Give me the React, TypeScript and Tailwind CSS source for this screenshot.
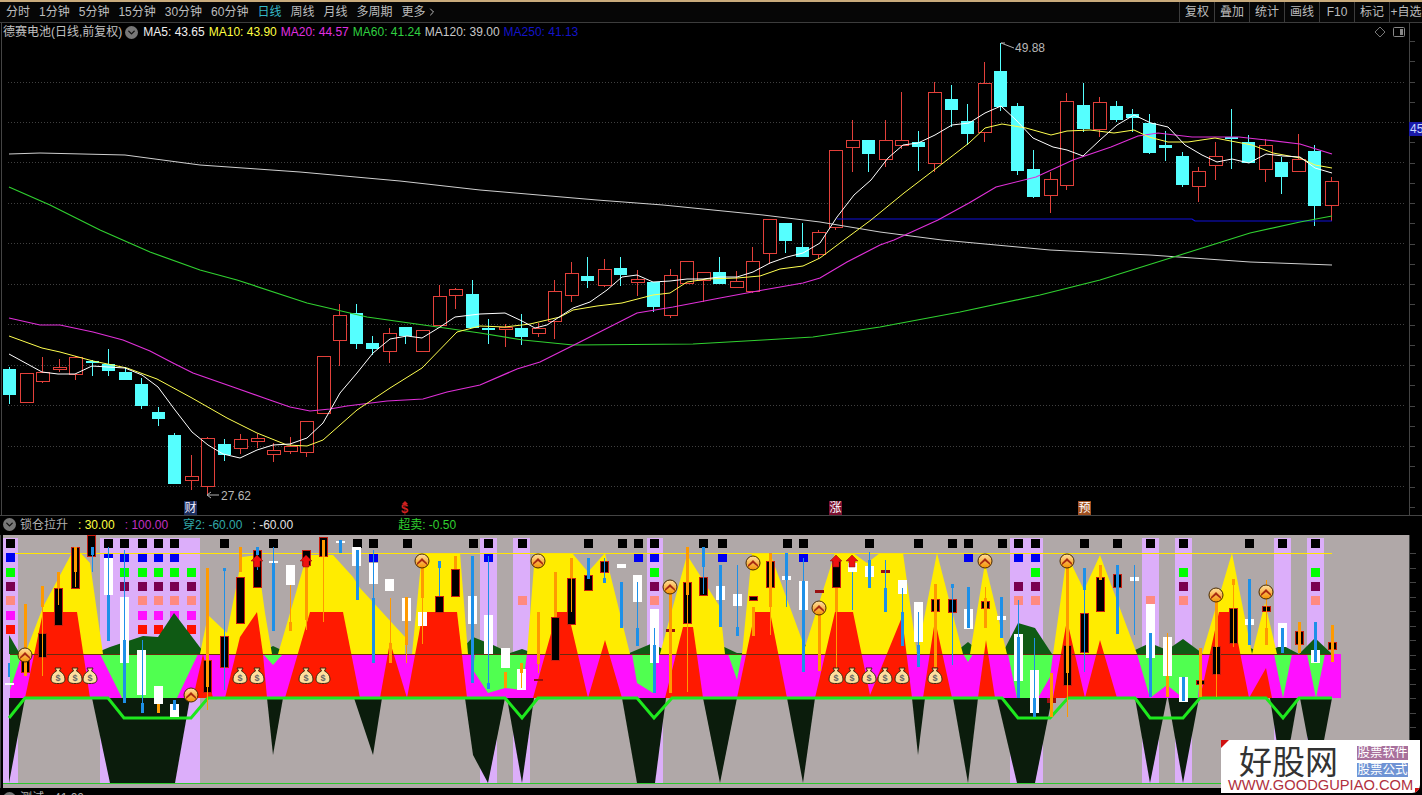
import { ChevronDown, ChevronRight } from "lucide-react";

const FONT = "[font-family:'Liberation_Sans','Noto_Sans_CJK_SC',sans-serif]";

const barX = (i: number) => Math.round(9 + 16.52 * i);

// bodyTop, bodyBottom, wickTop, wickBottom, red?
const candles = [
  [369, 394, 367, 404, 0], [373, 402, 373, 402, 1], [372, 381, 357, 383, 1], [367, 369, 359, 372, 1],
  [357, 374, 356, 380, 1], [361, 362, 360, 376, 0], [364, 370, 349, 376, 0], [372, 379, 367, 380, 0],
  [384, 405, 378, 409, 0], [412, 418, 407, 426, 0], [435, 483, 433, 483, 0], [476, 480, 455, 490, 1],
  [438, 486, 437, 495, 1], [444, 454, 439, 461, 0], [439, 448, 434, 454, 1], [438, 441, 434, 448, 1],
  [450, 454, 443, 462, 1], [446, 451, 437, 454, 1], [421, 452, 421, 457, 1], [356, 413, 356, 413, 1],
  [315, 340, 304, 366, 1], [313, 343, 304, 349, 0], [343, 348, 336, 355, 0], [333, 351, 328, 363, 1],
  [327, 335, 327, 344, 0], [330, 351, 330, 351, 1], [296, 325, 285, 325, 1], [289, 295, 288, 309, 1],
  [294, 327, 280, 327, 0], [328, 329, 319, 344, 0], [327, 329, 324, 347, 1], [328, 336, 314, 345, 0],
  [328, 333, 323, 337, 1], [291, 321, 280, 339, 1], [273, 295, 262, 302, 1], [276, 280, 257, 288, 0],
  [269, 285, 259, 287, 1], [268, 274, 257, 286, 0], [279, 282, 270, 296, 1], [282, 306, 282, 312, 0],
  [275, 315, 269, 318, 1], [261, 283, 261, 283, 1], [272, 280, 272, 302, 1], [272, 283, 257, 283, 0],
  [281, 287, 271, 287, 1], [261, 291, 247, 293, 1], [219, 253, 219, 264, 1], [223, 240, 223, 253, 0],
  [247, 256, 223, 257, 0], [232, 254, 230, 259, 1], [150, 227, 150, 230, 1], [140, 147, 120, 172, 1],
  [140, 153, 140, 172, 0], [140, 159, 120, 167, 1], [140, 145, 92, 149, 1], [142, 146, 131, 171, 0],
  [92, 163, 82, 172, 1], [99, 109, 85, 127, 0], [121, 133, 104, 145, 0], [83, 132, 62, 142, 1],
  [71, 106, 43, 111, 0], [106, 170, 103, 175, 0], [169, 196, 150, 198, 0], [179, 195, 172, 213, 1],
  [101, 185, 93, 190, 1], [105, 128, 83, 132, 0], [102, 129, 97, 137, 1], [106, 119, 101, 122, 0],
  [114, 117, 109, 132, 0], [123, 152, 114, 154, 0], [145, 147, 131, 161, 0], [156, 184, 152, 187, 0],
  [171, 186, 167, 202, 1], [156, 165, 142, 180, 1], [137, 138, 109, 169, 0], [142, 162, 135, 163, 0],
  [145, 169, 139, 182, 1], [162, 176, 157, 194, 0], [159, 171, 134, 171, 1], [151, 205, 145, 226, 0],
  [181, 205, 177, 221, 1],
];

const ma5 = "9,354 42,372 58,374 75,374 92,366 108,367 125,368 142,375 158,387 175,410 192,432 208,445 223,454 240,458 257,450 273,445 290,444 307,438 323,423 340,393 357,373 373,353 390,339 407,336 422,338 440,327 455,317 480,314 505,313 522,321 535,328 547,325 573,308 590,302 607,290 622,277 637,275 653,282 670,281 687,279 703,279 720,277 737,277 753,272 770,263 787,257 803,253 820,243 837,217 854,195 871,180 888,158 903,145 918,143 935,135 952,125 969,123 985,113 1001,106 1016,120 1033,138 1053,147 1067,150 1083,156 1100,140 1117,125 1134,115 1151,123 1168,127 1185,145 1202,155 1217,162 1232,159 1249,163 1266,154 1283,156 1300,157 1315,168 1332,173";
const ma10 = "9,336 42,348 60,352 93,361 127,368 157,379 192,398 227,418 257,433 287,445 307,446 323,440 357,410 390,388 422,368 457,332 480,326 505,327 530,324 560,317 573,310 597,306 622,303 653,295 670,293 687,282 707,279 737,278 760,276 780,269 803,266 820,258 844,240 871,220 904,193 938,167 969,143 985,128 1002,124 1026,128 1051,135 1067,131 1090,130 1114,133 1134,130 1149,137 1168,142 1188,142 1215,138 1236,142 1252,145 1273,153 1300,158 1315,165 1332,168";
const ma20 = "9,318 40,325 60,325 93,332 123,340 150,351 173,363 193,373 233,387 267,399 290,407 310,411 330,409 347,406 387,401 423,399 447,392 480,385 517,369 540,362 580,342 637,313 673,307 720,298 763,290 803,283 820,278 847,262 880,245 894,240 938,220 969,203 996,187 1036,177 1073,160 1111,147 1138,136 1158,133 1192,137 1239,137 1266,140 1300,144 1332,154";
const ma60 = "9,187 50,205 100,230 150,252 200,270 237,280 307,303 367,317 480,333 523,340 573,345 693,344 763,340 813,337 880,327 960,312 1040,295 1100,280 1180,255 1250,233 1300,222 1332,216";
const ma120 = "9,154 40,153 125,155 200,165 300,172 400,181 480,190 597,200 663,205 763,215 820,222 880,232 942,240 1050,250 1150,255 1250,262 1332,265";
const ma250 = "837,219 1192,219 1195,221 1332,221";

const lavender = [[3, 18], [100, 200], [480, 497], [513, 530], [647, 663], [1010, 1043], [1142, 1159], [1175, 1192], [1274, 1291], [1307, 1324]];

const rows: [number, string, number[]][] = [
  [539, "#000000", [10, 108, 124, 142, 158, 174, 224, 273, 357, 373, 407, 473, 488, 522, 588, 622, 638, 654, 703, 722, 787, 803, 869, 918, 952, 968, 1002, 1018, 1035, 1084, 1117, 1150, 1183, 1249, 1282, 1315]],
  [553, "#0000f0", [10, 108, 124, 142, 158, 174, 373, 488, 638, 654, 722, 803, 968, 1018, 1035]],
  [568, "#00ff00", [10, 124, 142, 158, 174, 191, 654, 1035, 1183, 1315]],
  [582, "#7a0050", [10, 124, 142, 158, 174, 191, 654, 1018, 1035, 1183, 1315]],
  [596, "#ff8a80", [10, 142, 158, 174, 191, 522, 654, 1018, 1035, 1150, 1183, 1315]],
  [611, "#ff10ff", [10, 142, 158, 174, 191]],
  [625, "#ff1000", [10, 142, 158, 174, 191]],
];

const hills = "9,654 9,635 20,654 93,654 110,647 143,636 158,637 174,613 205,654 258,654 273,646 290,654 343,654 360,645 373,648 387,654 457,654 473,637 493,645 510,653 522,649 533,653 627,654 653,643 670,654 720,654 720,645 737,653 787,654 803,643 818,654 853,654 868,650 883,654 907,654 918,652 930,654 953,654 968,642 983,654 1002,654 1018,623 1035,628 1052,654 1100,654 1112,653 1135,650 1150,643 1167,650 1183,639 1202,653 1234,654 1250,648 1265,653 1282,645 1299,654 1315,638 1332,654";

const yellow = [
  "25,654 43,607 75,547 90,563 103,654",
  "200,654 208,615 227,633 242,557 257,555 265,613 272,654",
  "278,654 307,555 333,555 353,577 360,588 405,637 405,654",
  "412,654 422,553 460,553 468,654",
  "527,654 535,553 572,553 588,572 605,553 630,654",
  "660,654 687,555 720,607 725,654",
  "742,654 752,553 770,553 802,640 805,647 835,553 853,553 867,563 880,553 903,553 917,654",
  "917,654 937,553 963,654",
  "970,654 985,563 1007,654",
  "1053,654 1067,555 1084,590 1100,555 1137,654",
  "1202,654 1232,553 1252,654",
  "1252,654 1265,603 1277,654",
];

const red = [
  "25,698 43,612 77,612 90,698", "193,698 203,654 213,698", "225,698 240,637 257,612 263,654 267,698",
  "285,698 310,612 343,612 360,698", "380,698 390,642 407,698", "407,698 423,612 457,612 467,698",
  "533,698 557,612 568,612 588,698 605,640 622,698", "665,698 683,627 693,627 703,698",
  "737,698 755,612 770,612 787,698", "815,698 835,612 853,612 870,695 902,617 912,698",
  "923,698 935,620 952,698", "978,698 986,640 995,698", "1053,698 1067,620 1085,698 1100,640 1117,698",
  "1200,698 1219,612 1232,612 1249,698 1266,668 1272,698",
];

const greens = [
  "10,654 22,654 10,690", "100,654 198,654 177,698 122,698", "263,654 283,654 273,665",
  "475,654 527,654 522,690 505,688 488,693 473,670", "632,654 657,654 653,693 637,683", "728,654 742,654 737,680",
  "963,654 973,654 968,662", "1008,654 1053,654 1050,677 1038,698 1017,698",
  "1137,654 1202,654 1198,698 1183,698 1167,685 1150,698", "1274,654 1292,654 1283,698", "1307,654 1325,654 1316,698",
];

const drops = [
  "9,698 25,698 9,783", "92,698 190,698 175,783 110,783", "267,698 283,698 273,755", "354,698 382,698 373,755",
  "465,698 505,698 488,783 473,755", "507,698 534,698 522,783", "622,698 666,698 655,783 637,783",
  "703,698 737,698 720,783", "787,698 815,698 803,783", "912,698 925,698 918,755", "953,698 978,698 968,783",
  "997,698 1052,698 1035,783 1017,783", "1135,698 1167,698 1150,783", "1168,698 1199,698 1183,783",
  "1270,698 1298,698 1283,783", "1300,698 1332,698 1316,783",
];

// x, top, bottom
const whites = [
  [104, 558, 595], [120, 597, 663], [137, 650, 695], [154, 686, 704], [170, 704, 717], [5, 683, 685], [269, 561, 563], [286, 565, 585],
  [336, 541, 543], [352, 547, 566], [369, 563, 584], [385, 579, 591], [402, 598, 621], [418, 612, 626], [468, 596, 624], [484, 615, 654],
  [501, 648, 668], [517, 669, 690], [617, 564, 568], [633, 575, 602], [650, 609, 663], [716, 586, 600], [733, 594, 606], [782, 576, 580],
  [799, 581, 610], [848, 563, 572], [865, 566, 577], [898, 580, 594], [914, 602, 642], [964, 609, 629], [997, 616, 620], [1014, 634, 681],
  [1030, 670, 713], [1130, 577, 581], [1146, 604, 658], [1163, 637, 676], [1179, 677, 702], [1245, 619, 625], [1278, 623, 647], [1311, 650, 663],
];

const blacks = [
  [87, 535, 557], [71, 547, 589], [54, 588, 626], [38, 633, 658], [21, 657, 673], [203, 660, 693], [220, 636, 668], [236, 577, 624],
  [253, 550, 588], [302, 550, 566], [319, 537, 557], [435, 596, 613], [451, 569, 597], [551, 617, 661], [567, 578, 625], [584, 575, 591],
  [600, 561, 573], [683, 582, 624], [699, 577, 596], [749, 596, 601], [766, 561, 588], [832, 561, 588], [931, 599, 612], [948, 599, 613],
  [981, 601, 609], [1063, 645, 686], [1080, 613, 653], [1096, 577, 612], [1113, 574, 588], [1196, 680, 685], [1212, 646, 675], [1229, 608, 644],
  [1262, 606, 612], [1295, 631, 645], [1328, 642, 650],
];

const dashes = [[670, 629, 632], [819, 590, 593], [885, 570, 573], [538, 679, 681], [1051, 698, 703]];

const B = "#1e90e8";
const O = "#ff9a00";
// x, top, bottom, colour, width
const strokes: [number, number, number, string, number][] = [
  [9, 663, 677, B, 2], [92, 547, 555, B, 3], [92, 555, 572, B, 1], [75, 547, 572, O, 3], [75, 572, 587, O, 1],
  [58, 572, 588, O, 3], [58, 588, 605, O, 1], [42, 586, 607, O, 3], [42, 607, 676, O, 1], [25, 604, 676, O, 3],
  [108, 547, 595, B, 1], [108, 595, 641, B, 3], [124, 550, 640, B, 1], [124, 640, 703, B, 3], [142, 640, 703, B, 1], [142, 703, 713, B, 3],
  [158, 704, 713, O, 3], [174, 700, 710, B, 3], [207, 568, 687, O, 3], [207, 687, 710, O, 1], [224, 568, 571, B, 3], [224, 571, 690, B, 1],
  [240, 547, 572, O, 3], [257, 547, 555, B, 3], [257, 555, 570, B, 1], [273, 547, 563, B, 1], [273, 563, 631, B, 3],
  [290, 585, 622, O, 1], [290, 622, 631, O, 3], [306, 566, 620, O, 3], [306, 620, 630, O, 1], [323, 540, 557, O, 3], [323, 557, 622, O, 1],
  [340, 540, 553, B, 3], [357, 550, 600, B, 3], [373, 550, 598, B, 1], [373, 598, 663, B, 3], [390, 598, 643, O, 1], [390, 643, 663, O, 3],
  [406, 597, 645, O, 3], [406, 645, 663, O, 1], [422, 567, 598, O, 3], [422, 598, 644, O, 1], [439, 561, 568, B, 3], [439, 568, 596, B, 1],
  [455, 556, 569, O, 3], [472, 556, 683, B, 3], [488, 556, 683, B, 1], [488, 683, 689, B, 3], [505, 672, 688, O, 3], [521, 663, 673, O, 3], [521, 673, 688, O, 1],
  [538, 612, 664, O, 3], [538, 664, 673, O, 1], [555, 572, 617, O, 3], [571, 558, 578, O, 3], [571, 578, 612, O, 1], [588, 558, 579, B, 3],
  [604, 558, 578, B, 1], [604, 578, 583, B, 3], [621, 582, 628, B, 3], [637, 582, 628, B, 1], [637, 628, 646, B, 3], [654, 628, 645, B, 1], [654, 645, 693, B, 3],
  [670, 593, 693, O, 3], [687, 547, 595, O, 3], [687, 595, 692, O, 1], [703, 547, 567, B, 3], [703, 567, 594, B, 1], [720, 565, 627, B, 3], [737, 565, 627, B, 1], [737, 627, 636, B, 3],
  [753, 607, 636, O, 3], [770, 553, 607, O, 3], [770, 607, 635, O, 1], [786, 553, 580, B, 3], [786, 580, 607, B, 1], [803, 558, 581, B, 1], [803, 581, 672, B, 3],
  [819, 615, 671, O, 3], [836, 588, 612, O, 3], [836, 612, 668, O, 1], [852, 572, 610, B, 1], [869, 552, 560, B, 1], [869, 560, 588, B, 3], [885, 560, 588, B, 1], [885, 588, 612, B, 3],
  [902, 588, 612, B, 1], [902, 612, 646, B, 3], [918, 612, 645, B, 1], [918, 645, 667, B, 3], [935, 584, 667, O, 3], [952, 584, 588, B, 3], [952, 588, 665, B, 1], [968, 587, 628, B, 3],
  [985, 587, 598, O, 1], [985, 598, 628, O, 3], [1001, 597, 638, B, 3], [1018, 600, 637, B, 1], [1018, 637, 698, B, 3], [1034, 638, 698, B, 1], [1034, 698, 717, B, 3], [1051, 673, 717, O, 3],
  [1067, 567, 673, O, 3], [1067, 673, 717, O, 1], [1084, 568, 590, B, 3], [1084, 590, 672, B, 1], [1100, 565, 580, O, 3], [1117, 565, 634, B, 3], [1134, 565, 635, B, 1],
  [1150, 633, 697, B, 3], [1167, 633, 676, O, 1], [1167, 676, 697, O, 3], [1183, 677, 701, B, 3], [1200, 648, 697, O, 3], [1216, 597, 647, O, 3], [1216, 647, 697, O, 1],
  [1233, 579, 585, O, 3], [1233, 585, 647, O, 1], [1249, 579, 645, B, 3], [1266, 580, 628, O, 1], [1266, 628, 645, O, 3], [1282, 628, 653, B, 3], [1299, 622, 653, O, 3], [1315, 622, 662, B, 3], [1332, 625, 662, O, 3],
];

const badges = [[25, 655], [191, 695], [422, 561], [538, 561], [670, 587], [753, 563], [819, 608], [985, 561], [1067, 561], [1216, 595], [1266, 592]];
const bags = [58, 75, 90, 240, 257, 306, 323, 836, 852, 869, 885, 902, 935];
const arrows = [[257, 555], [306, 555], [836, 555], [852, 555]];

const tools = ["分时", "1分钟", "5分钟", "15分钟", "30分钟", "60分钟", "日线", "周线", "月线", "多周期"];
const rightTools = ["复权", "叠加", "统计", "画线", "F10", "标记"];
const legend: [string, string][] = [
  ["MA5: 43.65", "text-[#f0f0f0]"], ["MA10: 43.90", "text-[#ffff40]"], ["MA20: 44.57", "text-[#e030e0]"],
  ["MA60: 41.24", "text-[#30d040]"], ["MA120: 39.00", "text-[#c8c8c8]"], ["MA250: 41.13", "text-[#1414c8]"],
];

function MainChart() {
  const grid = [82, 122, 162, 203, 243, 284, 324, 365, 405, 446, 486];
  const ticks = Array.from({ length: 24 }, (_, k) => 41 + k * 20.25);
  return (
    <svg viewBox="0 23 1422 492" width={1422} height={492} className="block shrink-0">
      {grid.map((y) => (
        <line key={y} x1={8} x2={1405} y1={y + 0.5} y2={y + 0.5} stroke="#404040" strokeDasharray="1 2" />
      ))}
      <line x1={1.5} x2={1.5} y1={23} y2={515} stroke="#444" />
      <line x1={1409.5} x2={1409.5} y1={23} y2={515} stroke="#444" />
      {ticks.map((y) => (
        <line key={y} x1={1409} x2={1415} y1={Math.round(y) + 0.5} y2={Math.round(y) + 0.5} stroke="#444" />
      ))}
      <rect x={1409} y={122} width={13} height={14} fill="#1a1aa8" />
      <text x={1410} y={133} fontSize={12} fill="#c8d8ff" fontFamily="Liberation Sans">45</text>
      <path d="M1380 27l5 5-5 5-5-5z" fill="none" stroke="#777" />
      <rect x={1393.5} y={27.5} width={11} height={9} rx={1} fill="none" stroke="#888" />
      <rect x={1400} y={29} width={3} height={6} fill="#888" />

      <g shapeRendering="crispEdges">
        {candles.map(([t, b, wt, wb, up], i) => {
          const x = barX(i);
          const c = up ? "#e2403a" : "#55ffff";
          return (
            <g key={i}>
              <line x1={x + 0.5} x2={x + 0.5} y1={wt} y2={wb} stroke={c} />
              {up ? (
                <rect x={x - 6} y={t + 0.5} width={13} height={b - t} fill="#000" stroke={c} />
              ) : (
                <rect x={x - 6} y={t} width={13} height={b - t + 1} fill={c} />
              )}
            </g>
          );
        })}
      </g>

      <polyline points={ma120} fill="none" stroke="#d0d0d0" strokeWidth={1} />
      <polyline points={ma250} fill="none" stroke="#1010d8" strokeWidth={1.2} />
      <polyline points={ma60} fill="none" stroke="#30d030" strokeWidth={1.2} />
      <polyline points={ma20} fill="none" stroke="#e030d8" strokeWidth={1.2} />
      <polyline points={ma10} fill="none" stroke="#ffff50" strokeWidth={1} />
      <polyline points={ma5} fill="none" stroke="#ffffff" strokeWidth={1} />

      <path d="M1001 43h4M1001 43l13 5" stroke="#b0b0b0" fill="none" />
      <text x={1015} y={52} fontSize={12} fill="#b8b8b8" fontFamily="Liberation Sans">49.88</text>
      <path d="M207 495h12M207 495l4-3M207 495l4 3" stroke="#b0b0b0" fill="none" />
      <text x={221} y={500} fontSize={12} fill="#b8b8b8" fontFamily="Liberation Sans">27.62</text>

      <rect x={184} y={501} width={13} height={14} fill="#1c2c5c" />
      <text x={184.500} y={512} fontSize={12} fill="#eef" fontFamily="Noto Sans CJK SC">财</text>
      <text x={401} y={513} fontSize={13} fontWeight={700} fill="#d02020" fontFamily="Liberation Sans">$</text>
      <path d="M405 501l3 3h-6z" fill="#d02020" />
      <rect x={829} y={501} width={13} height={14} fill="#7a1030" />
      <text x={829.500} y={512} fontSize={12} fill="#fff" fontFamily="Noto Sans CJK SC">涨</text>
      <rect x={1078} y={501} width={13} height={14} fill="#a05020" />
      <text x={1078.500} y={512} fontSize={12} fill="#fff" fontFamily="Noto Sans CJK SC">预</text>
    </svg>
  );
}

function IndicatorChart() {
  return (
    <svg viewBox="3 535 1406 253" width={1406} height={253} className="block shrink-0">
      <defs>
        <linearGradient id="gold" x1="0" y1="0" x2="0" y2="1">
          <stop offset="0" stopColor="#ffe0a0" />
          <stop offset="1" stopColor="#f59000" />
        </linearGradient>
      </defs>
      <g shapeRendering="crispEdges">
        {lavender.map(([a, b]) => (
          <rect key={a} x={a} y={538} width={b - a} height={245} fill="#dcaefa" />
        ))}
        {rows.map(([y, c, xs]) =>
          xs.map((x) => <rect key={`${y}-${x}`} x={x - 4} y={y} width={9} height={9} fill={c} />),
        )}
      </g>

      <polygon points={hills} fill="#0f5a14" />
      {yellow.map((p) => <polygon key={p} points={p} fill="#ffec00" />)}
      <rect x={10} y={654} width={1331} height={44} fill="#ff10ff" />
      {greens.map((p) => <polygon key={p} points={p} fill="#50ff50" />)}
      {red.map((p) => <polygon key={p} points={p} fill="#ff1a00" />)}
      <line x1={10} x2={1332} y1={654.5} y2={654.5} stroke="#6b2a10" />
      <line x1={15} x2={1332} y1={553.5} y2={553.5} stroke="#ffe600" shapeRendering="crispEdges" />

      {drops.map((p) => <polygon key={p} points={p} fill="#0b1c0c" />)}
      <polyline
        points="9,718 25,698 108,698 124,718 191,718 208,698 505,698 522,718 538,698 637,698 654,718 672,698 1002,698 1018,718 1050,718 1068,698 1135,698 1150,718 1183,718 1200,698 1266,698 1283,718 1299,698 1332,698"
        fill="none"
        stroke="#1ee81e"
        strokeWidth={3}
      />
      <line x1={3} x2={1409} y1={783.5} y2={783.5} stroke="#2cc82c" />

      <g shapeRendering="crispEdges">
        {whites.map(([x, a, b]) => <rect key={`${x}-${a}`} x={x} y={a} width={9} height={b - a} fill="#ffffff" />)}
        {blacks.map(([x, a, b]) => (
          <rect key={`${x}-${a}`} x={x + 0.5} y={a + 0.5} width={8} height={b - a - 1} fill="#000" stroke="#c81e10" />
        ))}
        {dashes.map(([x, a, b]) => (
          <rect key={x} x={x - 4} y={a} width={9} height={b - a} fill="#9a1010" />
        ))}
        {strokes.map(([x, a, b, c, w], i) => (
          <rect key={i} x={x - Math.floor(w / 2)} y={a} width={w} height={b - a} fill={c} />
        ))}
      </g>

      {arrows.map(([x, y]) => (
        <path key={x} d={`M${x} ${y}l6 6h-3v6h-6v-6h-3z`} fill="#f01010" stroke="#801010" strokeWidth={0.5} />
      ))}
      {badges.map(([x, y]) => (
        <g key={x}>
          <circle cx={x} cy={y} r={7} fill="url(#gold)" stroke="#4a2a00" />
          <path d={`M${x - 5} ${y + 2}l5-5 5 5v2l-5-4-5 4z`} fill="#a82a10" />
        </g>
      ))}
      {bags.map((x) => (
        <g key={x}>
          <path
            d={`M${x - 3} 668h6l-1.500 3c3.500 1.500 5.500 5 5.500 8 0 3.500-2.500 4.500-7 4.500s-7-1-7-4.500c0-3 2-6.500 5.500-8z`}
            fill="#ffdf9e"
            stroke="#3a2a10"
          />
          <text x={x} y={681} fontSize={9} fontWeight={700} textAnchor="middle" fill="#666" fontFamily="Liberation Sans">$</text>
        </g>
      ))}
    </svg>
  );
}

function Watermark() {
  return (
    <div className="absolute left-[1221px] top-[740px] h-[53px] w-[199px] overflow-hidden rounded-br-[8px] bg-white">
      <div className="absolute left-0 top-0 h-0 w-0 border-[4px] border-b-transparent border-l-[#d01010] border-r-transparent border-t-[#d01010]" />
      <div className="absolute bottom-0 right-0 h-[5px] w-[5px] bg-[#d01010]" />
      <div className="relative flex items-start pl-[18px] pt-[4px]">
        <span className="w-[102px] shrink-0 whitespace-nowrap text-[33px] leading-[33px] text-[#333] [font-family:'Noto_Sans_CJK_SC',sans-serif]">好股网</span>
        <div className="ml-[16px] mt-[2px] flex flex-col gap-[3px] whitespace-nowrap text-[12.500px] leading-[14px] text-white">
          <span className="w-[51px] bg-[#a8709c] text-center">股票软件</span>
          <span className="w-[51px] bg-[#6f93d4] text-center">股票公式</span>
        </div>
      </div>
      <div className="absolute bottom-0 left-[7px] whitespace-nowrap text-[14.700px] leading-[16px] text-[#b03040] [font-family:'Liberation_Sans',sans-serif]">
        WWW.GOODGUPIAO.COM
      </div>
    </div>
  );
}

const Dot = () => (
  <span className="flex h-[13px] w-[13px] shrink-0 items-center justify-center rounded-full bg-[#777]">
    <ChevronDown size={11} color="#111" strokeWidth={3} />
  </span>
);

export default function App() {
  return (
    <div className={`relative flex h-[795px] w-[1422px] flex-col overflow-hidden bg-black text-[12px] ${FONT}`}>
      <div className="h-[2px] shrink-0 bg-[#c9ab7c]" />
      <div className="flex h-[21px] shrink-0 items-center border-b border-[#3c3c3c] bg-[#060606] pl-[6px] text-[#bdbdbd]">
        <div className="flex items-center gap-[9px]">
          {tools.map((t) => (
            <span key={t} className={t === "日线" ? "text-[#35b8c8]" : ""}>{t}</span>
          ))}
          <span className="flex items-center">更多<ChevronRight size={12} /></span>
        </div>
        <div className="ml-auto flex h-full">
          {rightTools.map((t) => (
            <span key={t} className="flex w-[35px] items-center justify-center border-l border-[#3c3c3c]">{t}</span>
          ))}
          <span className="flex w-[33px] items-center justify-center whitespace-nowrap border-l border-[#3c3c3c]">+自选</span>
        </div>
      </div>

      <div className="relative h-[492px] shrink-0">
        <MainChart />
        <div className="absolute left-[3px] top-0 flex items-center whitespace-nowrap">
          <span className="text-[#c0c0c0]">德赛电池(日线,前复权)</span>
          <span className="ml-[3px]"><Dot /></span>
          <div className="ml-[5px] flex gap-[4px]">
            {legend.map(([t, c]) => <span key={t} className={c}>{t}</span>)}
          </div>
        </div>
      </div>

      <div className="flex h-[20px] shrink-0 items-center whitespace-nowrap border-t border-[#444] pb-[2px] pl-[3px]">
        <Dot />
        <span className="ml-[4px] text-[#b0b0b0]">锁仓拉升</span>
        <span className="ml-[10px] text-[#ffff40]">: 30.00</span>
        <span className="ml-[10px] text-[#c030c0]">: 100.00</span>
        <span className="ml-[15px] text-[#30a8a8]">穿2: -60.00</span>
        <span className="ml-[10px] text-[#e0e0e0]">: -60.00</span>
        <span className="ml-[105px] text-[#30d030]">超卖: -0.50</span>
      </div>

      <div className="flex h-[253px] shrink-0">
        <div className="w-[3px] border-l border-[#444]" />
        <div className="w-[1406px] bg-[#b0a8a8]">
          <IndicatorChart />
        </div>
        <div className="flex w-[13px] flex-col gap-[13.500px] border-l border-[#444] pt-[18px]">
          {Array.from({ length: 17 }, (_, k) => (
            <div key={k} className="h-px w-[6px] shrink-0 bg-[#444]" />
          ))}
        </div>
      </div>

      <div className="flex shrink-0 items-center gap-[4px] pl-[3px] pt-[1px] text-[#b0b0b0]">
        <Dot />
        <span>测试 : 41.00</span>
      </div>

      <Watermark />
    </div>
  );
}
